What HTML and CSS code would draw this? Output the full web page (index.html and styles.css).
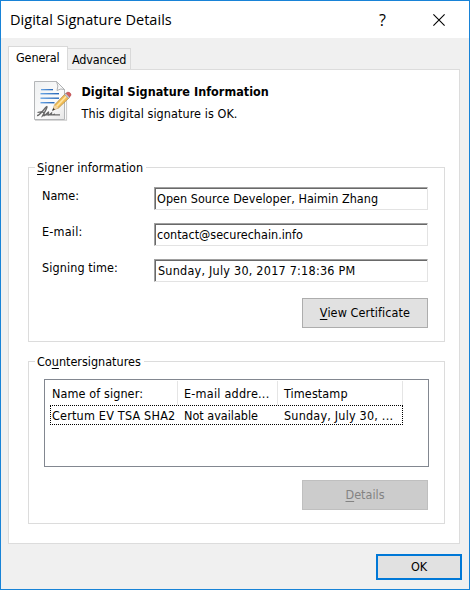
FILE: index.html
```html
<!DOCTYPE html>
<html lang="en">
<head>
<meta charset="utf-8">
<title>Digital Signature Details</title>
<link rel="stylesheet" href="styles.css">
</head>
<body>
<main class="dialog">
  <header class="titlebar">
    <h1 class="title">Digital Signature Details</h1>
    <span class="help">?</span>
    <svg class="close" width="12" height="12" viewBox="0 0 12 12"><path d="M.4.4 11.6 11.6M11.6.4.4 11.6" fill="none" stroke="#000" stroke-width="1.1"/></svg>
  </header>
  <nav class="tabs">
    <span class="tab active"><span class="t-general">General</span></span>
    <span class="tab"><span class="t-advanced">Advanced</span></span>
  </nav>
  <section class="panel">
    <div class="summary">
      <svg class="doc" width="40" height="42" viewBox="0 0 40 42">
        <defs>
          <linearGradient id="paper" x1="0" y1="0" x2="1" y2="1"><stop offset="0" stop-color="#eef0f1"/><stop offset=".6" stop-color="#fcfcfc"/><stop offset="1" stop-color="#e6e6e6"/></linearGradient>
          <linearGradient id="ink" x1="0" x2="1"><stop offset="0" stop-color="#69a5e4"/><stop offset="1" stop-color="#2766b7"/></linearGradient>
        </defs>
        <path d="M2 40.2H33.500V12" fill="none" stroke="#ccc" stroke-width="1.2"/>
        <path d="M1.500 1.500H23.500L31.500 9.500V39.500H1.500Z" fill="url(#paper)" stroke="#b4b6b8"/>
        <path d="M23.500 1.500Q26 6 24 10.500Q28 8 31.500 9.500Z" fill="#f9f9f9" stroke="#aeb0b2"/>
        <g fill="url(#ink)"><rect x="8" y="9" width="12" height="1.300"/><rect x="7.500" y="13" width="18.500" height="1.400"/><rect x="7.500" y="17.500" width="18.500" height="1.400"/><rect x="7.500" y="22" width="14" height="1.400"/></g>
        <path d="M4 35.500C7 36 13 26 14 26.500S9 37 8.500 37M4.500 32.500C9 31 12 32 11 35S15 32 15.500 32 14 36 16 35L18.500 33Q18 36 22 34M13 34.800H27" fill="none" stroke="#686868" stroke-width="1.300"/>
        <path d="M20 30L21.500 25 32.500 13.500 36.500 17.500 25.500 28Z" fill="#f2bd55" stroke="#a98542" stroke-width=".7"/>
        <path d="M23.500 26.500 34 15.500" stroke="#ffe4a0" stroke-width="1.800"/>
        <path d="M20 30L21.500 25 25.500 28Z" fill="#f3d6aa"/><path d="M19 31L20.300 28 22 29.500Z" fill="#333"/>
        <path d="M31.500 14.500 33 13 37 17 35.500 18.500Z" fill="#c2c8cf" stroke="#858c94" stroke-width=".4"/>
        <path d="M33.200 13.500Q34.500 11 37 12.800Q39.500 15 36.500 17Z" fill="#d65f60" stroke="#ad4e50" stroke-width=".5"/>
      </svg>
      <div class="summary-text">
        <h2 class="heading"><span class="t-heading">Digital Signature Information</span></h2>
        <p class="status"><span class="t-status">This digital signature is OK.</span></p>
      </div>
    </div>
    <section class="group signer">
      <h3 class="legend"><span class="t-signer"><u>S</u>igner information</span></h3>
      <div class="row"><label class="t-name">Name:</label><div class="field"><span class="t-person">Open Source Developer, Haimin Zhang</span></div></div>
      <div class="row"><label class="t-email">E-mail:</label><div class="field"><span class="t-contact">contact@securechain.info</span></div></div>
      <div class="row"><label class="t-time">Signing time:</label><div class="field date"><span class="t-date">Sunday, July 30, 2017 7:18:36 PM</span></div></div>
      <button class="button"><span class="t-view"><u>V</u>iew Certificate</span></button>
    </section>
    <section class="group counter">
      <h3 class="legend"><span class="t-counter">Co<u>u</u>ntersignatures</span></h3>
      <div class="list">
        <div class="list-row head"><span><span class="t-h1">Name of signer:</span></span><span><span class="t-h2">E-mail addre...</span></span><span><span class="t-h3">Timestamp</span></span></div>
        <div class="list-row selected"><span><span class="t-c1">Certum EV TSA SHA2</span></span><span><span class="t-c2">Not available</span></span><span><span class="t-c3">Sunday, July 30, ...</span></span></div>
      </div>
      <button class="button" disabled><span class="t-details"><u>D</u>etails</span></button>
    </section>
  </section>
  <footer class="footer"><button class="button ok"><span class="t-ok">OK</span></button></footer>
</main>
</body>
</html>
```
FILE: styles.css
```css
* { box-sizing: border-box; margin: 0; padding: 0; }
body { width: 470px; height: 590px; overflow: hidden; }
body, button { font: 12.5px/16px "DejaVu Sans Condensed", "DejaVu Sans", sans-serif; font-stretch: condensed; color: #000; }
span, label { white-space: nowrap; }
u { text-underline-offset: 2px; text-decoration-thickness: 1px; text-decoration-skip-ink: none; }
.dialog { width: 470px; height: 590px; border: 1px solid #1883d7; background: #f0f0f0; }
.titlebar { display: flex; align-items: center; height: 37px; padding: 0 24px 0 9px; background: #fff; }
.title { flex: 1; font: 400 14.5px/20px "Open Sans", "Noto Sans", sans-serif; font-stretch: normal; letter-spacing: .04px; }
.help { font: 16px/20px "Open Sans", sans-serif; width: 7px; margin-right: 47px; }
.close { display: block; }
.tabs { display: flex; align-items: flex-end; height: 31px; padding-left: 7px; }
.tab { width: 63px; height: 21px; padding: 3px 0 0 4px; border: 1px solid #d9d9d9; border-left: 0; border-bottom: 0; }
.tab.active { position: relative; width: 60px; height: 24px; margin-bottom: -1px; padding: 3px 0 0 7px; border-left: 1px solid #d9d9d9; background: #fff; }
.panel { width: 452px; height: 475px; margin-left: 7px; padding: 10px 14px 0 19px; border: 1px solid #dcdcdc; background: #fff; }
.summary { display: flex; height: 87px; padding-left: 5px; }
.doc { display: block; flex: none; }
.summary-text { padding: 4px 0 0 8.5px; }
.heading { font-size: 12.5px; line-height: 16px; font-weight: 700; }
.status { margin-top: 6px; }
.group { width: 417px; border: 1px solid #dcdcdc; padding: 0 16px 0 13px; display: flex; flex-direction: column; }
.signer { height: 175px; }
.counter { height: 163px; margin-top: 19px; padding-left: 15px; }
.legend { align-self: flex-start; height: 16px; margin: -8px 0 11px -7px; padding: 0 3px 0 2px; background: #fff; font-size: 12.5px; font-weight: 400; }
.counter .legend { margin-left: -9px; margin-bottom: 9px; }
.row { display: flex; height: 23px; margin-bottom: 13px; }
.row label { width: 112px; padding-top: 1px; }
.field { width: 274px; height: 23px; padding: 3px 0 0 2px; border: 1px solid #a0a0a0; border-right-color: #e3e3e3; border-bottom-color: #e3e3e3; box-shadow: inset 1px 1px #696969; }
.field.date { padding-left: 3px; }
.button { align-self: flex-end; width: 126px; height: 30px; margin-top: 3px; border: 1px solid #adadad; background: #e1e1e1; text-align: center; }
.button:disabled { margin-top: 13px; border-color: #bfbfbf; background: #ccc; color: #838383; }
.list { width: 385px; height: 88px; padding: 1px 0 0 5px; border: 1px solid #828790; }
.list-row { display: grid; grid-template-columns: 128px 100px 125px; width: 353px; }
.head { height: 24px; }
.head > span { padding: 5px 0 0 2px; border-right: 1px solid #e5e5e5; }
.head > span + span { padding-left: 6px; }
.selected { height: 20px; border: 1px dotted #000; }
.selected > span { padding: 2px 0 0 1px; }
.selected > span + span { padding-left: 5px; }
.footer { display: flex; justify-content: flex-end; padding: 10px 7px 0 0; }
.button.ok { width: 86px; height: 26px; margin: 0; border: 2px solid #0078d7; }

.t-general { letter-spacing: -.1px; }
.t-advanced { letter-spacing: -.15px; }
.t-heading { letter-spacing: .03px; }
.t-status { letter-spacing: .07px; }
.t-signer, .t-time, .t-view, .t-h1, .t-h3 { letter-spacing: .1px; }
.t-person { letter-spacing: .03px; }
.t-email, .t-c1, .t-c3 { letter-spacing: .2px; }
.t-date, .t-h2 { letter-spacing: .23px; }
```
